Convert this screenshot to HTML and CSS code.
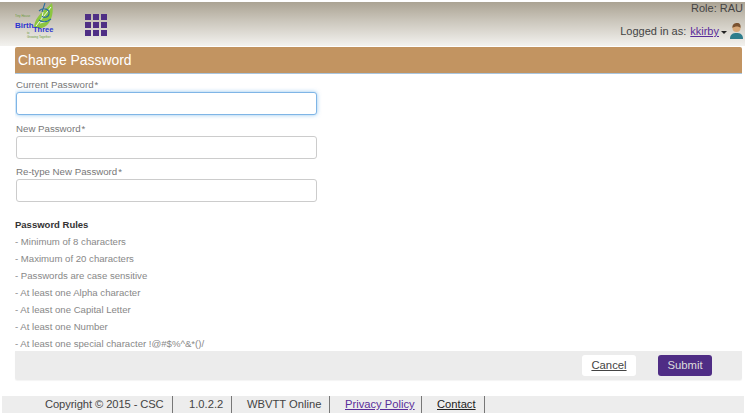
FILE: index.html
```html
<!DOCTYPE html>
<html lang="en">
<head>
<meta charset="utf-8">
<title>Change Password</title>
<link rel="stylesheet" href="styles.css">
</head>
<body>
<div class="page">
  <header class="topbar">
    <div class="brand">
      <svg class="logo" width="42" height="38" viewBox="0 0 42 38">
        <path d="M19 25 C20 14 30 8 37 1 C39 9 37 19 31 24 C27 27 22 27 19 25Z" fill="#8cc63f"/>
        <path d="M21 24 C26 17 31 12 36 5 M25 21 L33 19 M27 16 L28 10" stroke="#f4f8ee" stroke-width="1" fill="none"/>
        <path d="M24 9 C28 5 35 7 34 12 C33 16 28 16 27 14 M30 1 L27 10 M36 17 C31 21 27 20 24 18" stroke="#2a6f9e" stroke-width="1.1" fill="none"/>
        <text x="0" y="15" class="logo-tag">Tiny House</text>
        <text x="0" y="26" class="logo-birth">Birth</text>
        <text x="12" y="32" class="logo-tag">to</text>
        <text x="18" y="30" class="logo-three">Three</text>
        <text x="12" y="36" class="logo-tag">Growing Together</text>
      </svg>
      <div class="apps">
        <i></i><i></i><i></i><i></i><i></i><i></i><i></i><i></i><i></i>
      </div>
    </div>
    <div class="user">
      <div class="role">Role: RAU</div>
      <div class="login">
        <span>Logged in as:</span>
        <a href="#" class="link-user">kkirby</a>
        <span class="caret"></span>
        <svg class="avatar" width="13" height="16" viewBox="0 0 13 16">
          <path d="M0 16 C0 11 3 10 6.5 10 C10 10 13 11 13 16Z" fill="#2e7d8c"/>
          <circle cx="6.5" cy="5" r="4" fill="#d8a878"/>
          <path d="M2.5 5 C2 1 5 0 7 0 C10 0 11 2 10.5 5 C9 3 5 3 2.5 5Z" fill="#7a5230"/>
        </svg>
      </div>
    </div>
  </header>

  <main class="card">
    <h1 class="title">Change Password</h1>
    <form class="form">
      <div class="field">
        <label class="label">Current Password<span class="req">*</span></label>
        <input class="input focus" type="password">
      </div>
      <div class="field">
        <label class="label">New Password<span class="req">*</span></label>
        <input class="input" type="password">
      </div>
      <div class="field">
        <label class="label">Re-type New Password<span class="req">*</span></label>
        <input class="input" type="password">
      </div>
      <div class="rules">
        <h2 class="rules-title">Password Rules</h2>
        <p>- Minimum of 8 characters</p>
        <p>- Maximum of 20 characters</p>
        <p>- Passwords are case sensitive</p>
        <p>- At least one Alpha character</p>
        <p>- At least one Capital Letter</p>
        <p>- At least one Number</p>
        <p>- At least one special character !@#$%^&amp;*()/</p>
      </div>
    </form>
    <div class="actions">
      <a href="#" class="btn cancel">Cancel</a>
      <a href="#" class="btn submit">Submit</a>
    </div>
  </main>

  <footer class="footer">
    <span class="foot-item copy">Copyright © 2015 - CSC</span>
    <span class="foot-item ver">1.0.2.2</span>
    <span class="foot-item online">WBVTT Online</span>
    <span class="foot-item privacy"><a href="#" class="link-privacy">Privacy Policy</a></span>
    <span class="foot-item contact"><a href="#" class="link-contact">Contact</a></span>
  </footer>
</div>
</body>
</html>
```

FILE: styles.css
```css
* { box-sizing: border-box; }
html, body { margin: 0; padding: 0; background: #fff; }
body { font-family: "Liberation Sans", Arial, sans-serif; width: 747px; height: 418px; overflow: hidden; }
.page { width: 747px; height: 418px; display: flex; flex-direction: column; padding-top: 2px; }

.topbar {
  height: 44px;
  margin-right: 2px;
  padding: 0 2px 0 15px;
  display: flex;
  justify-content: space-between;
  background: linear-gradient(#aba393 0%, #c9c4b9 40%, #f3f2ef 100%);
  flex: none;
}
.brand { display: flex; align-items: flex-start; }
.logo-birth { font: bold 8px "Liberation Sans", sans-serif; fill: #2b35d0; }
.logo-three { font: bold 7.5px "Liberation Sans", sans-serif; fill: #2b35d0; }
.logo-tag { font: 3px "Liberation Sans", sans-serif; fill: #6a9a3a; }
.apps {
  margin: 12px 0 0 28px;
  display: grid;
  grid-template-columns: repeat(3, 6px);
  grid-auto-rows: 6px;
  gap: 2px;
}
.apps i { background: #4f2f85; display: block; }

.user { color: #444; font-size: 11px; text-align: right; }
.role { line-height: 13px; }
.login { margin-top: 8px; display: flex; align-items: center; justify-content: flex-end; line-height: 16px; }
.link-user { color: #5a2d9a; margin-left: 4px; }
.caret { width: 0; height: 0; margin: 2px 3px 0 2px; border-left: 3px solid transparent; border-right: 3px solid transparent; border-top: 3px solid #222; }

.card { margin: 1px 5px 0 15px; flex: none; display: flex; flex-direction: column; }
.title {
  margin: 0;
  height: 27px;
  padding-left: 3px;
  background: #c29461;
  border-bottom: 1px solid #a9c5de;
  border-radius: 2px 2px 0 0;
  color: #fff;
  font-size: 13.9px;
  font-weight: normal;
  line-height: 27px;
}
.form { height: 277px; padding-top: 4px; display: flex; flex-direction: column; overflow: hidden; }
.field { display: flex; flex-direction: column; margin-bottom: 6.5px; }
.label { color: #777; font-size: 9.7px; line-height: 13px; margin-bottom: 1px; margin-left: 1px; }
.req { margin-left: 1px; }
.input {
  width: 301px;
  height: 23px;
  margin-left: 1px;
  border: 1px solid #ccc;
  border-radius: 3px;
  background: #fff;
  padding: 0 6px;
  display: block;
}
.input.focus { border-color: #7fb5e6; box-shadow: 0 0 4px rgba(102, 175, 233, .7); outline: none; }

.rules { margin-top: 9px; }
.rules-title { margin: 0 0 2px; color: #333; font-size: 9.5px; font-weight: bold; line-height: 13px; }
.rules p { margin: 0; color: #888; font-size: 9.6px; line-height: 17px; }

.actions {
  height: 29px;
  background: #ececec;
  display: flex;
  justify-content: flex-end;
  align-items: center;
  padding-right: 30px;
  gap: 22px;
  border-radius: 0 0 2px 2px;
  box-shadow: 0 1px 1px #f4f4f4;
}
.btn { height: 21px; border-radius: 3px; font-size: 11.3px; line-height: 21px; text-align: center; display: block; }
.cancel { width: 54px; background: #fff; color: #444; }
.submit { width: 54px; background: #4f2d85; color: #ddd; text-decoration: none; }

.footer {
  margin: 16px 3px 0 2px;
  height: 17px;
  background: #ededed;
  display: flex;
  align-items: center;
  font-size: 11.2px;
  color: #444;
  padding-left: 43px;
  white-space: nowrap;
}
.foot-item { height: 17px; line-height: 17px; border-right: 1.5px solid #777; }
.copy { width: 128px; letter-spacing: -0.1px; }
.ver { width: 59px; padding-left: 16px; }
.online { width: 98px; padding-left: 15px; }
.privacy { width: 92px; padding-left: 15px; }
.contact { width: 63px; padding-left: 15px; }
.link-privacy { color: #5a2d9a; }
.link-contact { color: #222; }
```
